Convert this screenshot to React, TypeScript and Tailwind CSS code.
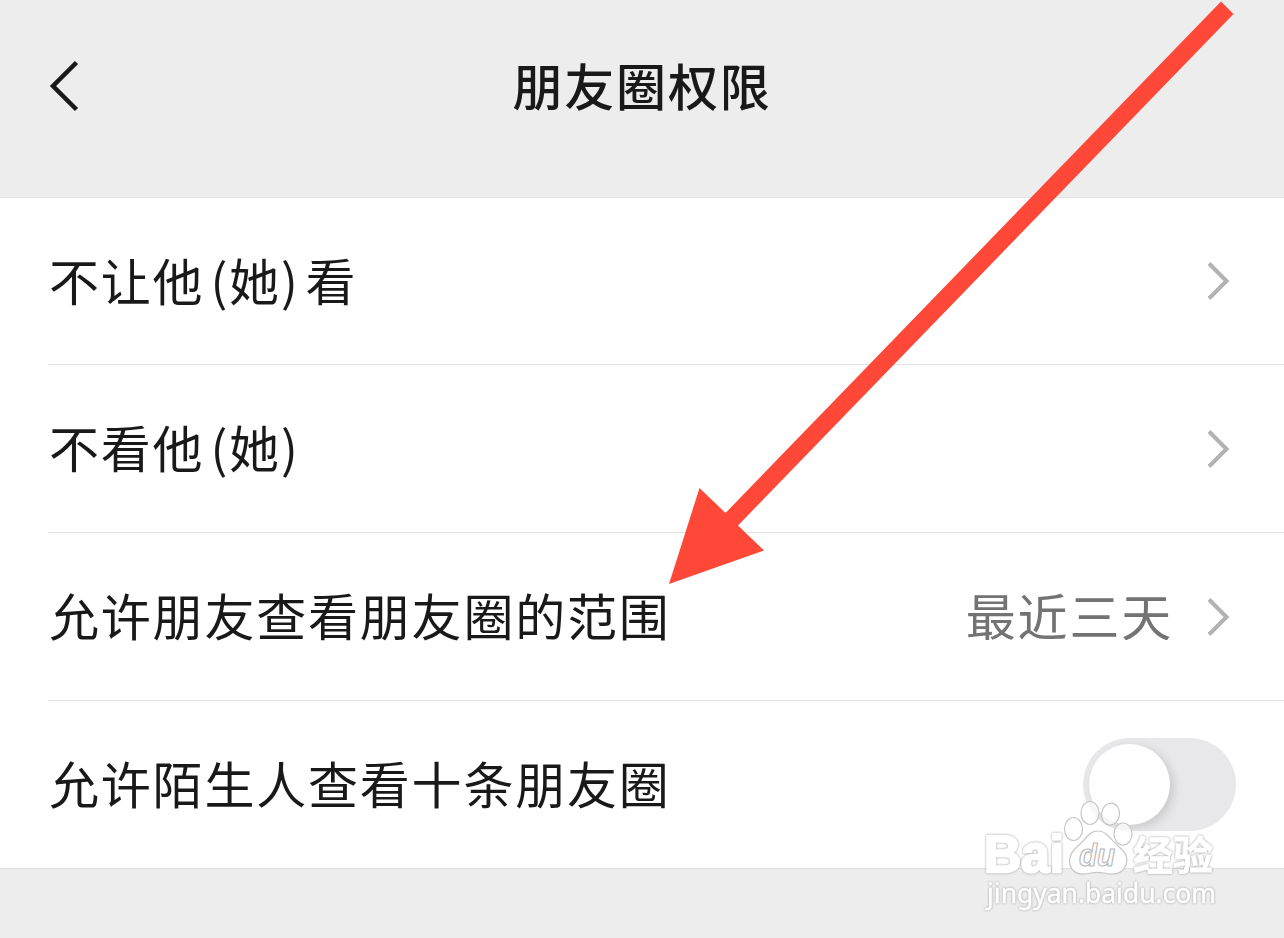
import React from 'react';

const Chevron: React.FC = () => (
  <svg className="h-10 w-6 shrink-0" viewBox="0 0 24 40" fill="none">
    <path d="M2 2.500 L19.500 20 L2 37.500" stroke="#b2b2b2" strokeWidth="4" />
  </svg>
);

const rows = [
  { label: '不让他 (她) 看' },
  { label: '不看他 (她)' },
  { label: '允许朋友查看朋友圈的范围', value: '最近三天' },
  { label: '允许陌生人查看十条朋友圈', toggle: true },
];

const Arrow: React.FC = () => (
  <svg className="pointer-events-none absolute inset-0 h-[938px] w-[1284px]" viewBox="0 0 1284 938">
    <path d="M1221 1.5 L1233.5 14 L738 525.5 L764 550.5 L669 584 L699.5 488 L725.5 513 Z" fill="#ff4837" />
  </svg>
);

const Watermark: React.FC = () => (
  <svg
    className="pointer-events-none absolute top-[790px] left-[976px] h-[130px] w-[260px] tracking-normal"
    viewBox="976 790 260 130"
  >
    <g fill="#fff" fillOpacity="0.7" stroke="#c6c6c6" strokeWidth="1.2">
      <ellipse cx="1073.5" cy="829" rx="9" ry="11.5" />
      <ellipse cx="1090" cy="813" rx="9" ry="11.5" />
      <ellipse cx="1110.5" cy="814" rx="9" ry="11" transform="rotate(8 1110 814)" />
      <ellipse cx="1123" cy="834" rx="9" ry="11" />
      <path
        fillOpacity="0.9"
        d="M1098 831 C1107 831 1110 839 1117 845 C1124 851 1129 856 1126 865 C1122 876 1112 875 1104 873 C1100 872 1096 872 1091 873 C1083 875 1073 875 1070 865 C1068 856 1073 850 1080 844 C1087 838 1089 831 1098 831 Z"
      />
      <text
        className="font-['Liberation_Sans',sans-serif]"
        x="1079"
        y="866"
        fontSize="31"
        fontStyle="italic"
        fontWeight="bold"
        stroke="#b8b8b8"
        textLength="36"
        lengthAdjust="spacingAndGlyphs"
      >
        du
      </text>
    </g>
    <g
      className="[filter:drop-shadow(0_0_0.8px_#999)]"
      fill="#fff"
      stroke="#fff"
      strokeLinejoin="round"
    >
      <text
        className="font-['Liberation_Sans',sans-serif]"
        x="984"
        y="871.5"
        fontSize="51"
        fontWeight="bold"
        strokeWidth="2.5"
        textLength="80"
        lengthAdjust="spacingAndGlyphs"
      >
        Bai
      </text>
      <text
        className="font-['Noto_Sans_CJK_SC',sans-serif]"
        x="1133"
        y="870"
        fontSize="40"
        fontWeight="bold"
        strokeWidth="0.8"
        textLength="80"
        lengthAdjust="spacingAndGlyphs"
      >
        经验
      </text>
      <text
        className="font-['Noto_Sans',sans-serif]"
        x="987"
        y="902.5"
        fontSize="27"
        strokeWidth="0.5"
        textLength="229"
        lengthAdjust="spacingAndGlyphs"
      >
        jingyan.baidu.com
      </text>
    </g>
  </svg>
);

const App: React.FC = () => {
  return (
    <div className="relative h-[938px] w-[1284px] overflow-hidden bg-[#ededed] font-['Noto_Sans_CJK_SC',sans-serif] text-[50px] tracking-[1.8px] text-[#191919]">
      <header className="grid h-[197px] grid-cols-[1fr_auto_1fr] items-start px-12 pt-[46px]">
        <svg className="mt-3.5 h-[52px] w-8" viewBox="0 0 32 52" fill="none">
          <path d="M28.5 2.5 L5 26 L28.5 49.5" stroke="#191919" strokeWidth="4.5" />
        </svg>
        <h1 className="leading-[76px] font-medium">朋友圈权限</h1>
      </header>

      <main className="border-t border-[#e3e3e3] bg-white">
        {rows.map((row, index) => (
          <div key={row.label} className="pl-12">
            <div
              className={`flex items-center justify-between ${
                index === 0 || index === rows.length - 1 ? 'h-[167px]' : 'h-[168px]'
              } ${index < rows.length - 1 ? 'border-b border-[#e0e0e0]' : ''}`}
            >
              <span className="pb-[5px] pl-px leading-[76px] whitespace-nowrap [word-spacing:-7px]">{row.label}</span>
              {row.toggle ? (
                <div className="mr-12 h-[93px] w-[153px] rounded-full bg-[#e8e8ea] p-1.5">
                  <div className="size-[81px] rounded-full bg-white shadow-[4px_3px_10px_rgba(0,0,0,0.13)]" />
                </div>
              ) : (
                <div className="mr-[53px] flex items-center gap-[34px]">
                  {row.value && <span className="pb-[5px] leading-[76px] text-[#737373]">{row.value}</span>}
                  <Chevron />
                </div>
              )}
            </div>
          </div>
        ))}
      </main>
      <div className="h-[70px] border-t border-[#e0e0e0]" />

      <Arrow />
      <Watermark />
    </div>
  );
};

export default App;
